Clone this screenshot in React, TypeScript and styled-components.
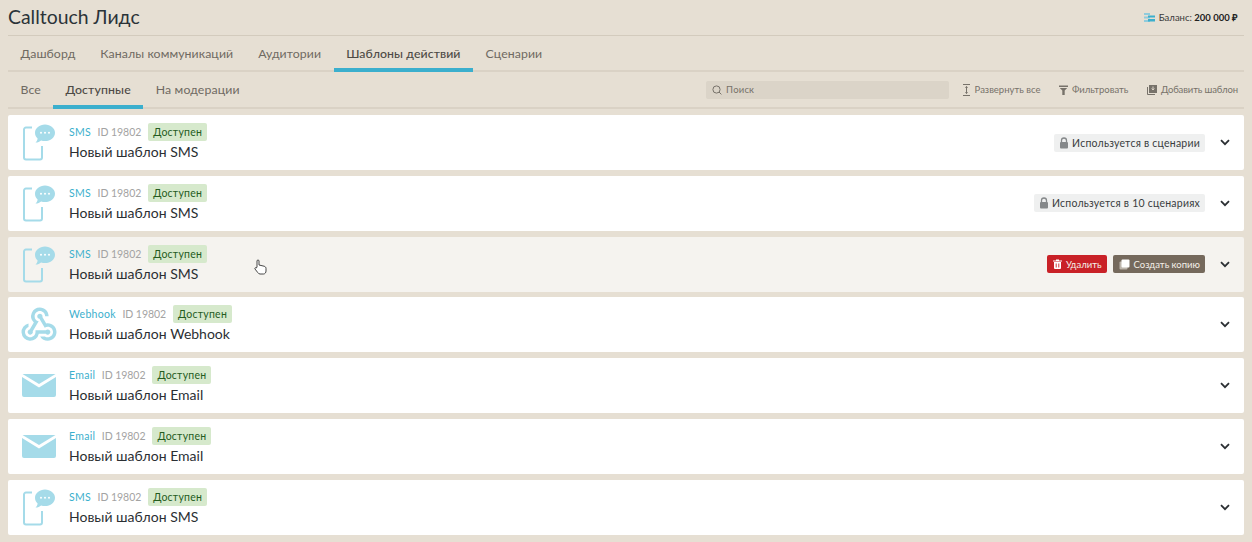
import React from 'react';
import styled, { createGlobalStyle } from 'styled-components';
import { MdWebhook } from 'react-icons/md';

const GlobalStyle = createGlobalStyle`
  html, body {
    margin: 0;
    padding: 0;
    background: #e6dfd3;
    font-family: Lato, "Open Sans", "Liberation Sans", sans-serif;
  }
`;

const Page = styled.div`
  width: 1252px;
  height: 542px;
  overflow: hidden;
  padding: 0 8px;
  box-sizing: border-box;
  position: relative;
`;

const Header = styled.div`
  height: 36px;
  display: flex;
  align-items: center;
  justify-content: space-between;
  border-bottom: 1px solid #d3cbbd;
  box-sizing: border-box;
`;

const Title = styled.div`
  font-size: 19.4px;
  color: #2b3338;
  margin-top: -3px;
`;

const Balance = styled.div`
  display: flex;
  align-items: center;
  gap: 4px;
  font-size: 9.5px;
  color: #3a3a3a;
  padding-right: 6px;
  b {
    color: #222;
  }
`;

const Tabs = styled.div`
  height: 36px;
  display: flex;
  border-bottom: 2px solid #dad2c5;
  box-sizing: border-box;
`;

const SubRow = styled(Tabs)`
  height: 37px;
  align-items: stretch;
  justify-content: space-between;
`;

const TabGroup = styled.div`
  display: flex;
`;

const Tab = styled.div<{ $active?: boolean; $pad: number }>`
  display: flex;
  align-items: center;
  padding: 2px ${p => p.$pad}px 0;
  margin-bottom: -2px;
  font-size: 12.3px;
  letter-spacing: 0.08px;
  color: ${p => (p.$active ? '#4d4a45' : '#6f6a62')};
  font-weight: ${p => (p.$active ? 500 : 400)};
  border-bottom: 4px solid ${p => (p.$active ? '#3bafcd' : 'transparent')};
  box-sizing: border-box;
`;

const SubTab = styled(Tab)`
  letter-spacing: 0.12px;
`;

const Tools = styled.div`
  display: flex;
  align-items: center;
  gap: 18.5px;
  padding-right: 6px;
`;

const Search = styled.div`
  width: 243px;
  height: 18px;
  border-radius: 2px;
  background: #dbd4c8;
  display: flex;
  align-items: center;
  gap: 4px;
  padding-left: 6px;
  box-sizing: border-box;
  font-size: 9.5px;
  color: #77726a;
  letter-spacing: 0.2px;
  margin-right: -6px;
`;

const Tool = styled.div<{ $tight?: boolean }>`
  display: flex;
  align-items: center;
  gap: 4px;
  font-size: 9.5px;
  letter-spacing: ${p => (p.$tight ? '-0.13px' : '0')};
  color: #77726a;
`;

const List = styled.div`
  margin-top: 6px;
  display: flex;
  flex-direction: column;
  gap: 5.83px;
`;

const Card = styled.div<{ $hover?: boolean }>`
  height: 55px;
  border-radius: 2px;
  background: ${p => (p.$hover ? '#f5f3ef' : '#fff')};
  display: flex;
  align-items: center;
  position: relative;
  padding-right: 14px;
`;

const IconBox = styled.div`
  width: 61px;
  height: 55px;
  display: flex;
  align-items: center;
  padding-left: 14px;
  box-sizing: border-box;
  flex: none;
`;

const Info = styled.div`
  flex: 1;
  display: flex;
  flex-direction: column;
  gap: 1px;
`;

const Meta = styled.div`
  display: flex;
  align-items: center;
  height: 18px;
  font-size: 10.5px;
`;

const Kind = styled.span`
  color: #3bafcd;
  letter-spacing: 0.3px;
  margin-right: 6.5px;
`;

const Id = styled.span`
  color: #a3a3a3;
  letter-spacing: -0.05px;
  margin-right: 7px;
`;

const Badge = styled.span`
  background: #d6e9cc;
  color: #255c1e;
  border-radius: 2px;
  height: 18px;
  padding: 0 5px;
  display: flex;
  align-items: center;
  letter-spacing: 0.25px;
`;

const Name = styled.div`
  font-size: 14px;
  line-height: 20px;
  color: #2b2f33;
`;

const Actions = styled.div`
  display: flex;
  align-items: center;
  gap: 6px;
  margin-right: 15px;
`;

const UsedTag = styled.div`
  height: 18px;
  display: flex;
  align-items: center;
  gap: 3px;
  padding: 0 5px;
  background: #eff0f0;
  border-radius: 2px;
  font-size: 10.5px;
  letter-spacing: 0.22px;
  color: #3a3d40;
`;

const ActionButton = styled.div<{ $bg: string }>`
  height: 18px;
  display: flex;
  align-items: center;
  gap: 4px;
  padding: 0 5px 0 6px;
  background: ${p => p.$bg};
  border-radius: 2px;
  font-size: 9.5px;
  color: #f4efe8;
`;

const Cursor = styled.svg`
  position: absolute;
  left: 254px;
  top: 259px;
`;

const PhoneIcon = () => (
  <svg width="34" height="37" viewBox="0 0 34 37" fill="none">
    <path d="M10 3.5H4a2 2 0 0 0-2 2V33.5a2 2 0 0 0 2 2h14a2 2 0 0 0 2-2V22" stroke="#a5dbe9" strokeWidth="2" />
    <path d="M23 0.5c5.5 0 10 3.7 10 8.3s-4.5 8.3-10 8.3c-1.4 0-2.7-.2-3.9-.7-1.4 1.1-3.2 2-5.6 2.2 1.2-1.1 1.9-2.4 2.1-4-1.6-1.5-2.6-3.5-2.6-5.8 0-4.6 4.5-8.3 10-8.3z" fill="#a5dbe9" />
    <circle cx="19" cy="8.8" r="1" fill="#fff" />
    <circle cx="23" cy="8.8" r="1" fill="#fff" />
    <circle cx="27" cy="8.8" r="1" fill="#fff" />
  </svg>
);

const WebhookIcon = styled(MdWebhook)`
  flex: none;
  margin-left: -4px;
  color: #a5dbe9;
`;

const MailIcon = () => (
  <svg width="34" height="23" viewBox="0 0 34 23">
    <path d="M0.5 0H33.5L17 10z" fill="#a5dbe9" />
    <path d="M0 3L17 13.5 34 3V21a2 2 0 0 1-2 2H2a2 2 0 0 1-2-2z" fill="#a5dbe9" />
  </svg>
);

const LockIcon = () => (
  <svg width="10" height="12" viewBox="0 0 10 12">
    <path d="M2.5 5V3.5a2.5 2.5 0 0 1 5 0V5" fill="none" stroke="#85888a" strokeWidth="1.3" />
    <rect x="1" y="5" width="8" height="6.5" rx="1" fill="#85888a" />
  </svg>
);

const TrashIcon = () => (
  <svg width="9" height="10" viewBox="0 0 9 10">
    <path d="M3 0.5h3v1h3v1H0v-1h3z" fill="#fff" />
    <path d="M1 3h7v6a1 1 0 0 1-1 1H2a1 1 0 0 1-1-1z" fill="#fff" />
    <path d="M3.2 4.5v4M5.8 4.5v4" stroke="#c92127" strokeWidth="0.9" />
  </svg>
);

const CopyIcon = () => (
  <svg width="11" height="11" viewBox="0 0 11 11">
    <rect x="0.5" y="2.5" width="8" height="8" rx="1" fill="#bdb6ac" />
    <rect x="2.5" y="0.5" width="8" height="8" rx="1" fill="#fff" />
  </svg>
);

const Chevron = () => (
  <svg width="10" height="7" viewBox="0 0 10 7" fill="none">
    <path d="M1 1.2L5 5.2 9 1.2" stroke="#2b2f33" strokeWidth="1.8" />
  </svg>
);

const icons = { SMS: <PhoneIcon />, Webhook: <WebhookIcon size={42} />, Email: <MailIcon /> };

type Row = { kind: 'SMS' | 'Webhook' | 'Email'; used?: string; hover?: boolean };

const rows: Row[] = [
  { kind: 'SMS', used: 'Используется в сценарии' },
  { kind: 'SMS', used: 'Используется в 10 сценариях' },
  { kind: 'SMS', hover: true },
  { kind: 'Webhook' },
  { kind: 'Email' },
  { kind: 'Email' },
  { kind: 'SMS' },
];

const App = () => (
  <Page>
    <GlobalStyle />
    <Header>
      <Title>Calltouch Лидс</Title>
      <Balance>
        <svg width="11" height="9" viewBox="0 0 11 9">
          <path d="M0 0h6v2H0zM0 3.5h6v2H0zM0 7h6v2H0z" fill="#8fcbdc" />
          <path d="M4 2.5h7v2H4zM4 6h7v2.5H4z" fill="#3bafcd" />
        </svg>
        <span>
          Баланс: <b>200 000 ₽</b>
        </span>
      </Balance>
    </Header>
    <Tabs>
      <Tab $pad={12.5}>Дашборд</Tab>
      <Tab $pad={12.5}>Каналы коммуникаций</Tab>
      <Tab $pad={12.5}>Аудитории</Tab>
      <Tab $pad={12.5} $active>
        Шаблоны действий
      </Tab>
      <Tab $pad={12.5}>Сценарии</Tab>
    </Tabs>
    <SubRow>
      <TabGroup>
        <SubTab $pad={12.5}>Все</SubTab>
        <SubTab $pad={12} $active>
          Доступные
        </SubTab>
        <SubTab $pad={13}>На модерации</SubTab>
      </TabGroup>
      <Tools>
        <Search>
          <svg width="10" height="10" viewBox="0 0 10 10" fill="none">
            <circle cx="4.5" cy="4.5" r="3.6" stroke="#77726a" strokeWidth="1" />
            <path d="M7 7l2.4 2.4" stroke="#77726a" strokeWidth="1" />
          </svg>
          Поиск
        </Search>
        <Tool>
          <svg width="9" height="12" viewBox="0 0 9 12" fill="none">
            <path d="M1 .5h7M1 11.5h7M4.5 2.5v7" stroke="#77726a" />
            <path d="M3 4l1.5-2L6 4zM3 8l1.5 2L6 8z" fill="#77726a" />
          </svg>
          Развернуть все
        </Tool>
        <Tool>
          <svg width="9" height="10" viewBox="0 0 9 10">
            <path d="M0 0.5h9v1.5H0zM.8 3h7.4L5.7 5.5V10H3.3V5.5z" fill="#77726a" />
          </svg>
          Фильтровать
        </Tool>
        <Tool $tight>
          <svg width="10" height="10" viewBox="0 0 10 10">
            <path d="M0 2h1v7h7v1H1a1 1 0 0 1-1-1z" fill="#77726a" />
            <path d="M2 0h8v8H2z" fill="#77726a" />
            <path d="M6 1.5v3M4.7 3.5L6 5l1.3-1.5" stroke="#e6dfd3" fill="none" strokeWidth="0.9" />
          </svg>
          Добавить шаблон
        </Tool>
      </Tools>
    </SubRow>
    <List>
      {rows.map((r, i) => (
        <Card key={i} $hover={r.hover}>
          <IconBox>{icons[r.kind]}</IconBox>
          <Info>
            <Meta>
              <Kind>{r.kind}</Kind>
              <Id>ID 19802</Id>
              <Badge>Доступен</Badge>
            </Meta>
            <Name>Новый шаблон {r.kind}</Name>
          </Info>
          <Actions>
            {r.used && (
              <UsedTag>
                <LockIcon />
                {r.used}
              </UsedTag>
            )}
            {r.hover && (
              <>
                <ActionButton $bg="#c92127">
                  <TrashIcon />
                  Удалить
                </ActionButton>
                <ActionButton $bg="#75695c">
                  <CopyIcon />
                  Создать копию
                </ActionButton>
              </>
            )}
          </Actions>
          <Chevron />
        </Card>
      ))}
    </List>
    <Cursor width="13" height="16" viewBox="0 0 13 16" fill="#fff" stroke="#333" strokeWidth="0.9">
      <path d="M3 8V2a1 1 0 0 1 2 0v4l5 1.2c1.2.3 2 1 2 2.3V12c0 1.5-1 3-2.5 3H6c-1 0-1.6-.6-2.2-1.4L1 10c-.6-.9.6-1.8 1.3-1z" />
    </Cursor>
  </Page>
);

export default App;
